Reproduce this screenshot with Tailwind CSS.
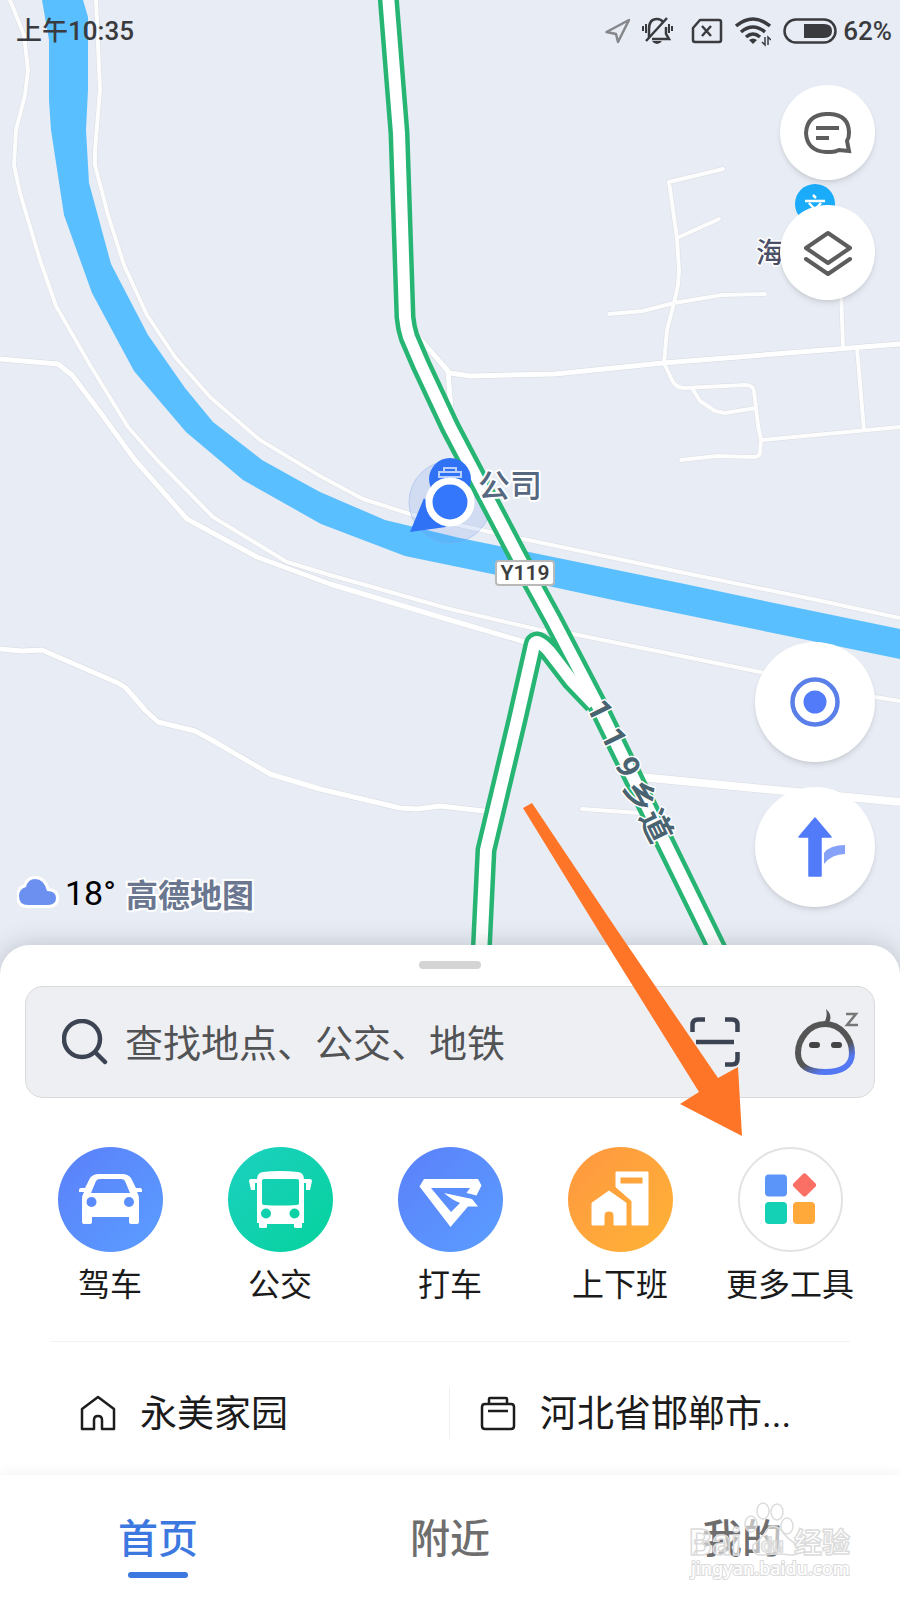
<!DOCTYPE html>
<html lang="zh-CN">
<head>
<meta charset="utf-8">
<meta name="viewport" content="width=device-width, initial-scale=1">
<title>高德地图</title>
<script src="https://cdn.jsdelivr.net/npm/@tailwindcss/browser@4"></script>
</head>
<body class="bg-[#e8ecf4] font-['Roboto','Noto_Sans_CJK_SC',sans-serif]">
<main class="relative flex min-h-screen flex-col overflow-hidden">

  <!-- Map area -->
  <section class="relative flex flex-1 flex-col pb-[78px]" aria-label="地图">
    <svg class="absolute inset-0 h-full w-full" viewBox="0 0 900 985" preserveAspectRatio="xMidYMin slice" aria-hidden="true">
      <defs>
        <g id="roads" fill="none" stroke-linejoin="round" stroke-linecap="round">
          <path d="M10 0 24 35 28 70 25 95 16 130 14 165 20 193 40 260 56 306 90 365 128 427 157 460 213 517 287 562 330 575 450 609 540 630 573 634 760 672 875 697 900 701"/>
          <path d="M96 0 98 45 100 90 95 150 95 165 108 215 124 265 147 315 175 357 210 397 260 440 320 476 363 499 413 515 490 532 680 572 817 600 900 618"/>
          <path d="M723 169 669 182 677 238 679 270 678 285 674 303 667 330 664 363 672 380Q676 388 684 388L745 385Q753 385 754 391L758 425 761 440 760 452Q760 457 754 457L717 456 681 460M677 238 719 219M609 314 643 311 674 303 722 295 765 294M692 388 700 401 715 411 725 413 756 408M762 440 900 427M841 290 843 348M857 348 864 430M582 809 640 813"/>
        </g>
        <g id="lanes" fill="none" stroke-linejoin="round" stroke-linecap="round">
          <path d="M0 359 58 364 72 375 100 412 135 460 187 519 257 557 330 584 450 620 525 642"/>
          <path d="M0 649 22 651 42 650 118 683 126 688 145 710 158 722 195 731 210 739 270 774 320 789 400 808 417 809 440 806 484 811"/>
          <path d="M450 373 470 376 555 374 663 363 900 344"/>
          <path d="M414 332 448 371 451 410"/>
        </g>
        <g id="highway" fill="none" stroke-linejoin="round">
          <path d="M388 -5 399 133 405 317Q406 328 409 337L421 365 450 427 520 560 553 620 598 706 720 955"/>
          <path d="M594 704 572 681 549 651Q536 637 534 645L517 720 486 850 481 955"/>
        </g>
      </defs>
      <use href="#roads" stroke="#d9dce2" stroke-width="5"/>
      <use href="#lanes" stroke="#d5d9df" stroke-width="6"/>
      <path d="M640 777 900 802" stroke="#d9dce2" stroke-width="9"/>
      <use href="#roads" stroke="#fdfdfe" stroke-width="4"/>
      <path fill="#5abffe" d="M42 0 49 40 49 100 51 130 64 215 92 293 134 371 186 432 243 480 321 524 405 556 497 575 613 600 900 659V629L760 600 680 583 460 538 385 520 320 492 298 480 262 460 213 422 185 388 148 335 111 264 89 183 86 130 88 90 88 17 83 0Z"/>
      <use href="#lanes" stroke="#fff" stroke-width="5"/>
      <path d="M640 777 900 802" stroke="#fff" stroke-width="8"/>
      <circle cx="450" cy="502" r="41" fill="#5b86ee" fill-opacity=".16" stroke="#7fa5ee" stroke-opacity=".4"/>
      <use href="#highway" stroke="#27b574" stroke-width="21"/>
      <use href="#highway" stroke="#fff" stroke-width="12"/>
      <!-- Company pin under the current position -->
      <circle cx="450" cy="479" r="21" fill="#3072f6"/>
      <path fill="none" stroke="#b9d0ff" stroke-width="2" d="M444 472v-4h12v4M439 478v-6h22v6M439 477h22"/>
      <path fill="#3072f6" d="M424 498 410 532 446 527Z"/>
      <circle cx="450" cy="502" r="21" fill="#3577fc" stroke="#fff" stroke-width="7"/>
      <g font-weight="500" paint-order="stroke" stroke="#fff" stroke-linejoin="round">
        <text x="478" y="497" font-size="32" fill="#56687f" stroke-width="4">公司</text>
        <text x="756" y="263" font-size="28" fill="#4b5069" stroke-width="3">海</text>
        <g font-size="32" font-weight="700" fill="#496470" stroke-width="3" text-anchor="middle">
          <text transform="translate(600 710) rotate(64)" y="11">1</text>
          <text transform="translate(614 738) rotate(64)" y="11">1</text>
          <text transform="translate(628 767) rotate(64)" y="11">9</text>
          <text transform="translate(640 796) rotate(64)" y="11">乡</text>
          <text transform="translate(656 826) rotate(64)" y="11">道</text>
        </g>
      </g>
      <rect x="496" y="561" width="58" height="24" rx="3" fill="#fff" stroke="#b9b9b9" stroke-width="2"/>
      <text x="525" y="580" font-size="21" font-weight="600" fill="#3e3e3e" text-anchor="middle">Y119</text>
      <circle cx="815" cy="204" r="20" fill="#1aabfa"/>
      <path fill="none" stroke="#fff" stroke-width="2.500" d="M805 201h20M813 195l3 3M809 203l12 13M821 203l-12 13"/>
    </svg>

    <!-- Status bar -->
    <header class="relative flex h-[60px] items-center justify-between pl-4 pr-2 pt-0.5 text-[26px] font-medium text-[#3a3b3f]">
      <span>上午10:35</span>
      <div class="flex items-center">
        <svg class="h-8 w-[118px]" viewBox="0 0 118 32" fill="none" stroke="#3a3b3f" aria-hidden="true">
          <path stroke="#85878b" stroke-width="2.500" stroke-linejoin="round" d="M1.500 17 24 5 13 27 11 19Z"/>
          <g transform="translate(37 0)">
            <path stroke-width="2.500" d="M7 22V14Q7 4 15 4Q19 4 21 7M24 12V19L27 24H10M4 26 25 3"/>
            <path stroke-width="2" d="M4 9v9M1 11v5M27 9v9M30 11v5"/>
            <path fill="#3a3b3f" stroke="none" d="M10 26h10q-2 3-5 3t-5-3z"/>
          </g>
          <path stroke-width="2.500" stroke-linejoin="round" d="M95 5H114Q116 5 116 7V25Q116 27 114 27H90Q88 27 88 25V13ZM97 11l9 10M106 11l-9 10"/>
        </svg>
        <svg class="ml-3 h-8 w-9" viewBox="0 0 36 32" fill="none" stroke="#3a3b3f" stroke-width="3.500" aria-hidden="true">
          <path d="M1 11Q18-3 35 11M6 17Q18 7 30 17M11 22Q18 16 25 22"/>
          <path fill="#3a3b3f" stroke="none" d="M14 25q4-3 8 0l-4 4z"/>
          <path stroke-width="1.500" d="M30 22v8l-3-3M33 30v-8l3 3"/>
        </svg>
        <svg class="ml-3 h-8 w-[54px]" viewBox="0 0 54 32" aria-hidden="true">
          <rect x="1.500" y="4.500" width="51" height="23" rx="11.500" fill="none" stroke="#3a3b3f" stroke-width="2.500"/>
          <path fill="#3a3b3f" d="M21 9h20q8 0 8 7t-8 7H21z"/>
        </svg>
        <span class="ml-1.5">62%</span>
      </div>
    </header>

    <!-- Floating map controls -->
    <div class="relative flex flex-1 flex-col items-end justify-between px-[25px] pt-[25px]">
      <div class="flex flex-col gap-[25px]">
        <button type="button" aria-label="消息" class="flex size-[95px] items-center justify-center rounded-full bg-white shadow-md">
          <svg class="size-12" viewBox="0 0 48 48" fill="none" stroke="#5d5d5d" stroke-width="4"><path stroke-linejoin="miter" d="M22 5H26Q45 6 45 24Q45 29 43 32L45 42 35 41Q31 43 27 43H22Q3 42 2 24Q3 6 22 5Z"/><path d="M12 19H35M12 29H25"/></svg>
        </button>
        <button type="button" aria-label="图层" class="flex size-[95px] items-center justify-center rounded-full bg-white shadow-md">
          <svg class="size-12" viewBox="0 0 48 48" fill="none" stroke="#5d5d5d" stroke-width="4" stroke-linejoin="round" stroke-linecap="round"><path d="M24 4 46 19 24 34 2 19ZM2 30 24 45 46 30"/></svg>
        </button>
      </div>
      <div class="flex w-full items-end justify-between">
        <div class="-ml-2 flex h-7 items-center">
          <svg class="h-10 w-11" viewBox="0 0 44 40" aria-hidden="true"><path fill="#6b90f0" stroke="#fff" stroke-width="6" paint-order="stroke" stroke-linejoin="round" d="M11 32Q2 32 2 23Q2 16 9 14Q11 6 18 6Q27 6 30 18Q39 18 39 25Q39 32 31 32Z"/></svg>
          <span class="ml-1 text-[34px] text-black">18°</span>
          <svg class="ml-2 h-12 w-[136px]" viewBox="0 -4 136 48"><text x="2" y="34" font-size="32" font-weight="700" fill="#6b7790" stroke="#fff" stroke-width="4" paint-order="stroke">高德地图</text></svg>
        </div>
        <div class="flex flex-col gap-[25px]">
          <button type="button" aria-label="定位" class="flex size-[120px] items-center justify-center rounded-full bg-white shadow-md">
            <svg class="size-[50px]" viewBox="0 0 50 50"><circle cx="25" cy="25" r="22.500" fill="none" stroke="#5b7fe8" stroke-width="4.500"/><circle cx="25" cy="25" r="11.500" fill="#527bfa"/></svg>
          </button>
          <button type="button" aria-label="路线" class="flex size-[120px] items-center justify-center rounded-full bg-white shadow-md">
            <svg class="h-[60px] w-[60px]" viewBox="0 0 60 60"><path fill="#527bfa" stroke="#527bfa" stroke-width="1.500" stroke-linejoin="round" d="M30 1 46 20H36V59H24V20H14Z"/><path fill="#86a2f8" d="M39 36Q45 28 60 28V37Q47 37 39 47Z"/></svg>
          </button>
        </div>
      </div>
    </div>
  </section>

  <!-- Bottom sheet -->
  <section class="relative -mt-10 rounded-t-[30px] bg-white pt-4 shadow-[0_0_24px_rgba(60,70,80,0.25)]">
    <div class="mx-auto h-2 w-[62px] rounded-full bg-[#d4d4d4]"></div>
    <form class="mx-[25px] mt-[17px] flex h-28 items-center rounded-[18px] border border-[#dadadc] bg-[#eeeff3] pl-9 pr-[14px]">
      <label for="search" class="shrink-0">
        <svg class="size-[46px]" viewBox="0 0 46 46" fill="none" stroke="#3c4453" stroke-width="4.500" stroke-linecap="round" role="img" aria-label="搜索"><circle cx="20" cy="20" r="18"/><path d="M34 34 43 43"/></svg>
      </label>
      <input id="search" type="text" placeholder="查找地点、公交、地铁" class="ml-[17px] min-w-0 flex-1 pt-1 text-[38px] outline-none placeholder:text-[#525355]">
      <button type="button" aria-label="扫一扫" class="ml-4 shrink-0">
        <svg class="size-[50px]" viewBox="0 0 50 50" fill="none" stroke="#3c4453" stroke-width="4.500"><path d="M2.500 15V8Q2.500 2.500 8 2.500H15M35 2.500H42Q47.500 2.500 47.500 8V15M47.500 35V42Q47.500 47.500 42 47.500H35M15 47.500H8Q2.500 47.500 2.500 42V35M6 25H44"/></svg>
      </button>
      <button type="button" aria-label="语音助手" class="ml-[50px] shrink-0">
        <svg class="h-[75px] w-[70px]" viewBox="0 0 70 75">
          <defs><linearGradient id="face" x1="0.200" y1="0.300" x2="0.600" y2="1"><stop offset=".55" stop-color="#555"/><stop offset=".9" stop-color="#5478f4"/></linearGradient></defs>
          <path fill="none" stroke="url(#face)" stroke-width="6" d="M35 19C51 19 62 34 62 48C62 61 51 67 35 67C19 67 8 61 8 48C8 34 19 19 35 19Z"/>
          <path fill="#555" d="M36 4Q43 10 39 18H34Q38 11 36 4Z"/>
          <path stroke="#444" stroke-width="6" stroke-linecap="round" d="M22 40h5M44 40h5"/>
          <path fill="none" stroke="#777" stroke-width="2.500" d="M56 9H66L57 20H68"/>
        </svg>
      </button>
    </form>

    <div class="mx-[25px] mt-[49px] grid grid-cols-5 text-[32px] leading-10 text-[#1b1b1b]">
      <a href="#drive" class="flex flex-col items-center gap-[13px]">
        <svg class="size-[105px] rounded-full bg-linear-to-br from-[#5b80fa] to-[#5a9dff]" viewBox="0 0 105 105" aria-hidden="true">
          <path fill="#fff" fill-rule="evenodd" d="M27 41 32 31Q35 27 41 27H64Q70 27 73 31L78 41H82Q84 41 84 43V45H79Q81 48 81 53V75Q81 77 79 77H73Q71 77 71 75V70H34V75Q34 77 32 77H26Q24 77 24 75V53Q24 48 26 45H21V43Q21 41 23 41ZM33 46H72L67 34Q66 32 63 32H42Q39 32 38 34Z"/>
          <circle cx="33.500" cy="55" r="5" fill="#5a8afc"/><circle cx="71" cy="55" r="5" fill="#5a8ffd"/>
        </svg>
        <span>驾车</span>
      </a>
      <a href="#bus" class="flex flex-col items-center gap-[13px]">
        <svg class="size-[105px] rounded-full bg-linear-to-br from-[#1bd0c0] to-[#04d29c]" viewBox="0 0 105 105" aria-hidden="true">
          <path fill="#fff" fill-rule="evenodd" d="M29 32Q29 26 35 25Q52 23 70 25Q76 26 76 32H82Q84 32 84 34L82 43H78V36H76V76H74V80Q74 81 72 81H68Q66 81 66 80V77H39V80Q39 81 37 81H33Q31 81 31 80V76H29V36H27V43H23L21 34Q21 32 23 32ZM34 34V56Q34 58 36 58Q52 59 69 58Q71 58 71 56V34Q71 32 69 32H36Q34 32 34 34Z"/>
          <circle cx="38" cy="66.500" r="5" fill="#10d0ae"/><circle cx="66.500" cy="66.500" r="5" fill="#0bd1a5"/>
        </svg>
        <span>公交</span>
      </a>
      <a href="#taxi" class="flex flex-col items-center gap-[13px]">
        <svg class="size-[105px] rounded-full bg-linear-to-br from-[#5b80fa] to-[#5a9dff]" viewBox="0 0 105 105" aria-hidden="true">
          <path fill="#fff" d="M26 32H80L83.500 38.500 78.500 48.500 68.500 46 72 41H33L53 65 62 56Q54 53 46 46L74 52 80 59.500H70L52.500 80 21.500 39.500Z"/>
        </svg>
        <span>打车</span>
      </a>
      <a href="#commute" class="flex flex-col items-center gap-[13px]">
        <svg class="size-[105px] rounded-full bg-linear-to-br from-[#ff9740] to-[#ffb336]" viewBox="0 0 105 105" aria-hidden="true">
          <path fill="#fff" stroke="#fff" stroke-width="1" stroke-linejoin="round" fill-rule="evenodd" d="M24 78V56L41 44 58 56V78H46V69Q46 64 41 64Q36 64 36 69V78ZM48 25H80V78H64V54L48 40ZM52 30V37H75V30Z"/>
        </svg>
        <span>上下班</span>
      </a>
      <a href="#more" class="flex flex-col items-center gap-[13px]">
        <svg class="size-[105px] rounded-full border-2 border-[#e3e3e3] bg-white" viewBox="2 2 101 101" aria-hidden="true">
          <rect x="27" y="27.500" width="22" height="22" rx="4" fill="#5b95fa"/>
          <rect x="57.500" y="29" width="18" height="18" rx="3" fill="#fb7064" transform="rotate(45 66.500 38)"/>
          <rect x="27" y="55" width="22" height="22" rx="4" fill="#14d1b6"/>
          <rect x="55" y="55" width="22" height="22" rx="4" fill="#ffa93a"/>
        </svg>
        <span class="whitespace-nowrap">更多工具</span>
      </a>
    </div>

    <div class="mx-[50px] mt-9 h-px bg-[#f3f3f3]"></div>
    <div class="grid grid-cols-2 pb-9 pt-[45px] text-[37px] text-[#1b1b1b]">
      <a href="#home" class="flex h-[52px] items-center gap-6 border-r border-[#f0f0f0] pl-20">
        <svg class="size-9 shrink-0" viewBox="0 0 36 36" fill="none" stroke="#1d1d1d" stroke-width="2.500" stroke-linejoin="round" aria-hidden="true"><path d="M18 2 34 14V34H22V25Q22 21 18 21Q14 21 14 25V34H2V14Z"/></svg>
        <span class="pt-1">永美家园</span>
      </a>
      <a href="#company" class="flex h-[52px] min-w-0 items-center gap-6 pl-[30px]">
        <svg class="size-9 shrink-0" viewBox="0 0 36 36" fill="none" stroke="#1d1d1d" stroke-width="2.500" stroke-linejoin="round" aria-hidden="true"><path d="M9 9V4Q9 3 10 3H26Q27 3 27 4V9M5 9H31Q34 9 34 12V31Q34 34 31 34H5Q2 34 2 31V12Q2 9 5 9ZM8 16H28"/></svg>
        <span class="whitespace-nowrap pt-1">河北省邯郸市...</span>
      </a>
    </div>
  </section>

  <!-- Tab bar -->
  <nav class="relative grid grid-cols-3 bg-white px-3 pb-[22px] pt-[41px] text-[40px] font-medium leading-[48px] text-[#6e6e6e] shadow-[0_-2px_12px_rgba(0,0,0,0.05)]">
    <a href="#index" aria-current="page" class="flex flex-col items-center gap-2 text-[#3d78e0]">首页<span class="h-[6px] w-[60px] rounded-full bg-[#3d78e0]"></span></a>
    <a href="#nearby" class="text-center">附近</a>
    <a href="#mine" class="text-center">我的</a>
    <!-- Watermark -->
    <svg class="pointer-events-none absolute bottom-3 right-[37px] h-[90px] w-[174px]" viewBox="0 0 174 90" aria-hidden="true">
      <g fill="#fff" fill-opacity=".55" stroke="#dcdcdc" stroke-width="1.500">
        <text x="0" y="57" font-size="36" font-weight="700">Bai</text>
        <path d="M80 29Q89 26 95 36Q100 42 108 47Q112 58 101 57Q90 55 75 57Q62 58 64 47Q72 42 80 29Z"/>
        <ellipse cx="62" cy="26" rx="6" ry="8"/><ellipse cx="74" cy="13" rx="6" ry="8"/><ellipse cx="88" cy="14" rx="6" ry="8"/><ellipse cx="98" cy="28" rx="6" ry="8"/>
        <text x="72" y="54" font-size="20" font-weight="700">du</text>
        <text x="105" y="55" font-size="28" font-weight="700">经验</text>
      </g>
      <text x="2" y="77" font-size="18" fill="#fff" stroke="#dadada" stroke-width="2" paint-order="stroke" font-family="Noto Sans">jingyan.baidu.com</text>
    </svg>
  </nav>

  <!-- Tutorial arrow pointing at the tools entry -->
  <svg class="pointer-events-none absolute bottom-[460px] left-[58%] h-[340px] w-[225px]" viewBox="522 800 225 340" aria-hidden="true">
    <path fill="#ff7527" d="M523 808 532 803 617 930 718 1078 738 1067 742 1136 680 1104 699 1092 598 930Z"/>
  </svg>
</main>
</body>
</html>
